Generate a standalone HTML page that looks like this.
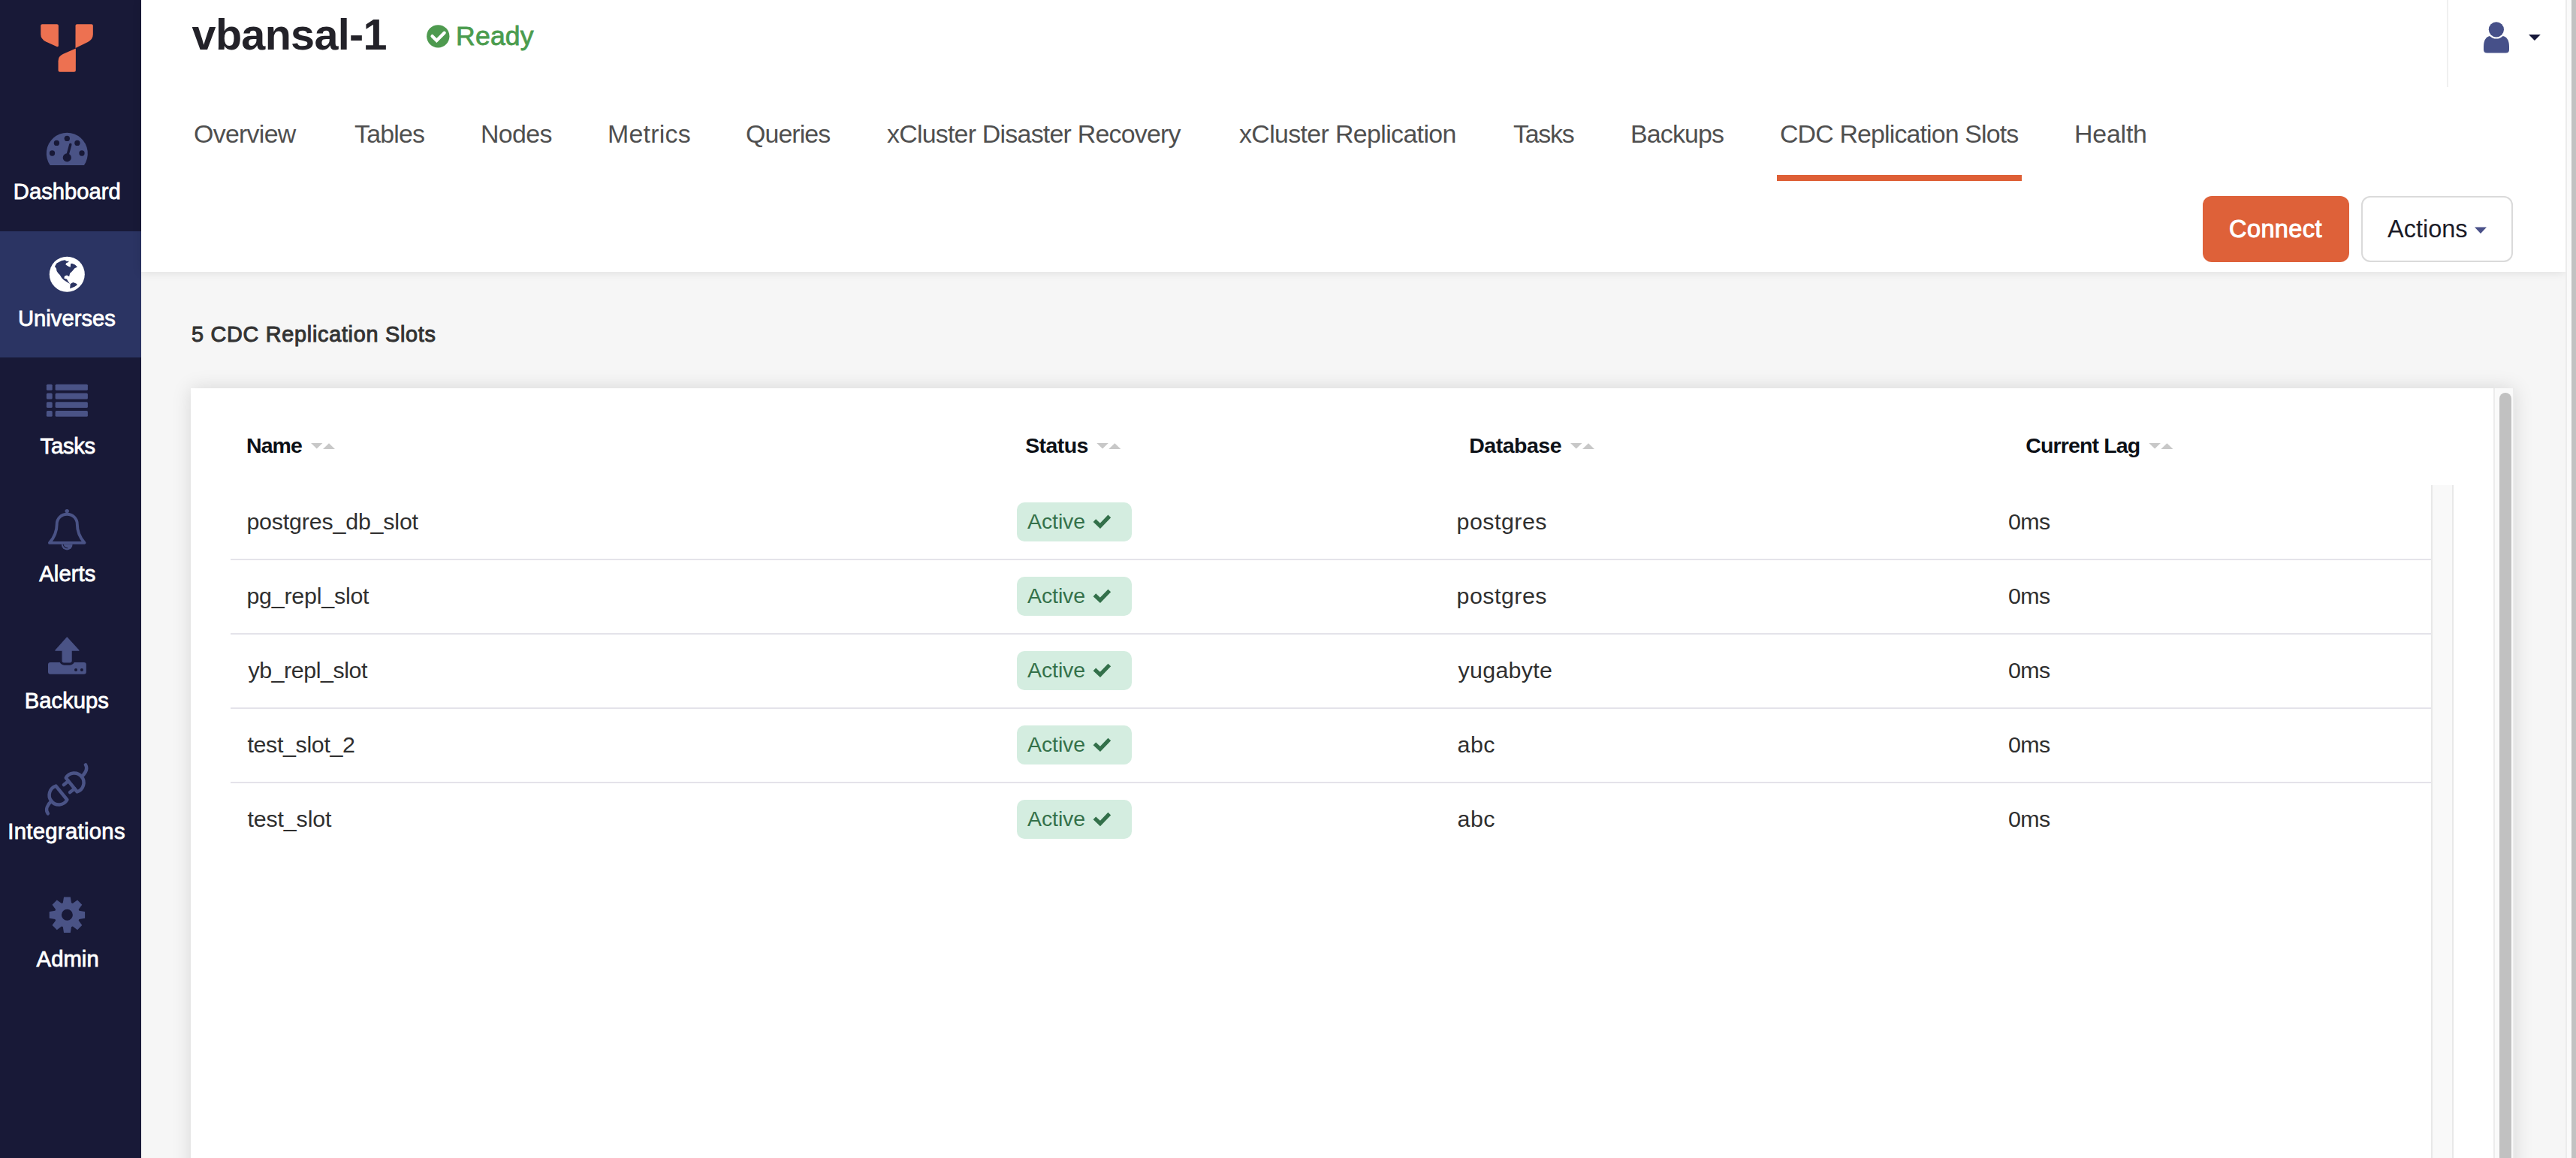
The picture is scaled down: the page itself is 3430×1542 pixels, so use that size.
<!DOCTYPE html>
<html><head><meta charset="utf-8">
<style>
html,body{margin:0;padding:0;}
body{width:3430px;height:1542px;overflow:hidden;position:relative;background:#f6f6f6;font-family:"Liberation Sans", sans-serif;}
.t{position:absolute;white-space:nowrap;line-height:1;}
svg{position:absolute;left:0;top:0;}
</style></head><body>
<div style="position:absolute;left:0;top:0;width:188px;height:1542px;background:#181937"></div>
<div style="position:absolute;left:0;top:308px;width:188px;height:168px;background:#2b3463"></div>
<div style="position:absolute;left:188px;top:0;width:3228px;height:362px;background:#fff;box-shadow:0 1px 12px rgba(0,0,0,0.10)"></div>
<div style="position:absolute;left:3258px;top:0;width:2px;height:116px;background:#f0f0f0"></div>
<div style="position:absolute;left:2366px;top:233px;width:326px;height:8px;background:#de5f36"></div>
<div style="position:absolute;left:2933px;top:261px;width:195px;height:88px;border-radius:12px;background:#de6139"></div>
<div style="position:absolute;left:3144px;top:261px;width:198px;height:84px;border-radius:12px;border:2px solid #dadada;background:#fff"></div>
<div style="position:absolute;left:3416px;top:0;width:14px;height:1542px;background:#fafafa;border-left:2px solid #ececec;box-sizing:border-box"></div>
<div style="position:absolute;left:3424px;top:0;width:6px;height:1542px;background:#c2c2c2"></div>
<div style="position:absolute;left:254px;top:517px;width:3094px;height:1100px;background:#fff;box-shadow:0 0 24px rgba(0,0,0,0.13)"></div>
<div style="position:absolute;left:3320px;top:517px;width:28px;height:1100px;background:#fafafa;border-left:2px solid #ececec;border-right:2px solid #ececec;box-sizing:border-box"></div>
<div style="position:absolute;left:3328px;top:523px;width:16px;height:1100px;background:#c1c1c1;border-radius:8px"></div>
<div style="position:absolute;left:3237px;top:646px;width:30px;height:1000px;background:#f9f9f9;border-left:2px solid #e8e8e8;border-right:2px solid #e8e8e8;box-sizing:border-box"></div>
<div style="position:absolute;left:307px;top:744.0px;width:2930px;height:2px;background:#e4e3ea"></div>
<div style="position:absolute;left:307px;top:843.0px;width:2930px;height:2px;background:#e4e3ea"></div>
<div style="position:absolute;left:307px;top:942.1px;width:2930px;height:2px;background:#e4e3ea"></div>
<div style="position:absolute;left:307px;top:1041.2px;width:2930px;height:2px;background:#e4e3ea"></div>
<div style="position:absolute;left:1354px;top:669.0px;width:153px;height:52px;border-radius:10px;background:#d4ede0"></div>
<div style="position:absolute;left:1354px;top:768.0px;width:153px;height:52px;border-radius:10px;background:#d4ede0"></div>
<div style="position:absolute;left:1354px;top:867.1px;width:153px;height:52px;border-radius:10px;background:#d4ede0"></div>
<div style="position:absolute;left:1354px;top:966.1px;width:153px;height:52px;border-radius:10px;background:#d4ede0"></div>
<div style="position:absolute;left:1354px;top:1065.2px;width:153px;height:52px;border-radius:10px;background:#d4ede0"></div>
<svg width="3430" height="1542" viewBox="0 0 3430 1542">
<g transform="translate(48,26) scale(0.06566)" fill="#ed7151"><path d="M125 95 L425 95 Q455 95 455 125 L455 525 Q455 562 418 550 L200 450 Q95 395 95 300 L95 125 Q95 95 125 95 Z"/><path d="M830 95 L1125 95 Q1155 95 1155 125 L1155 300 Q1155 400 1050 455 L800 578 L800 125 Q800 95 830 95 Z"/><path d="M805 585 L805 1030 Q805 1062 773 1062 L482 1062 Q450 1062 450 1030 L450 840 Q450 745 545 700 Z"/></g>
<g><path d="M66.7 220 A27.5 27.5 0 1 1 111.9 220 Z" fill="#4a5386"/><g fill="#181937"><circle cx="89.3" cy="184.4" r="3.65"/><circle cx="75.4" cy="190.4" r="3.65"/><circle cx="102.9" cy="190.4" r="3.65"/><circle cx="69.5" cy="204" r="3.65"/><circle cx="109" cy="204" r="3.65"/><circle cx="89.3" cy="209.9" r="5.6"/></g><line x1="89.3" y1="209" x2="93.8" y2="192.5" stroke="#181937" stroke-width="3.4" stroke-linecap="round"/></g>
<circle cx="89.3" cy="365.2" r="23.5" fill="#ffffff"/><path d="M72.95 354.69 L75.54 350.54 L81.76 347.18 L86.42 346.14 L89.02 347.95 L91.61 347.44 L91.09 348.99 L87.98 350.54 L87.46 352.62 L91.09 354.69 L93.68 355.73 L94.20 351.06 L96.27 351.06 L99.90 352.62 L103.01 355.47 L99.38 357.28 L96.27 360.91 L93.16 364.02 L92.64 366.09 L92.12 368.16 L89.02 366.61 L85.91 367.64 L85.39 370.75 L89.02 371.79 L90.57 374.38 L93.16 378.01 L89.02 375.41 L84.87 372.82 L82.28 370.23 L79.69 366.09 L77.62 364.02 L75.54 360.91 L75.03 357.80 Z M93.68 378.01 L97.31 375.93 L101.45 377.49 L103.01 379.30 L99.38 381.63 L93.16 384.22 Z" fill="#2b3463"/>
<rect x="61.85" y="511.80" width="7.85" height="7.85" rx="1.5" fill="#4a5386"/>
<rect x="73.6" y="511.80" width="43.3" height="7.85" rx="1.5" fill="#4a5386"/>
<rect x="61.85" y="523.53" width="7.85" height="7.85" rx="1.5" fill="#4a5386"/>
<rect x="73.6" y="523.53" width="43.3" height="7.85" rx="1.5" fill="#4a5386"/>
<rect x="61.85" y="535.26" width="7.85" height="7.85" rx="1.5" fill="#4a5386"/>
<rect x="73.6" y="535.26" width="43.3" height="7.85" rx="1.5" fill="#4a5386"/>
<rect x="61.85" y="546.99" width="7.85" height="7.85" rx="1.5" fill="#4a5386"/>
<rect x="73.6" y="546.99" width="43.3" height="7.85" rx="1.5" fill="#4a5386"/>
<path d="M66 722.9 C72 716 75.7 708 75.7 698 C75.7 690 82 684.7 89.2 684.7 C96.4 684.7 102.8 690 102.8 698 C102.8 708 106.5 716 112.5 722.9 Z" fill="none" stroke="#4a5386" stroke-width="3.9" stroke-linejoin="round"/><circle cx="89.2" cy="680.6" r="2.7" fill="#4a5386"/><path d="M81.8 725 A7.4 7.4 0 0 0 96.6 725 Z" fill="#4a5386"/><path d="M84.2 725 A5.6 5.6 0 0 0 90.2 729.8" fill="none" stroke="#181937" stroke-width="1.1"/>
<path d="M89.25 849 L105 866.1 L95.1 866.1 L95.1 879.8 Q95.1 881.8 93.1 881.8 L85.1 881.8 Q83.1 881.8 83.1 879.8 L83.1 866.1 L73.8 866.1 Z" fill="#4a5386" stroke="#4a5386" stroke-width="1.2" stroke-linejoin="round"/><path d="M67 882 L79.7 882 Q82 885.8 86 885.8 L92.5 885.8 Q96.5 885.8 98.8 882 L111.8 882 Q114.8 882 114.8 885 L114.8 894.8 Q114.8 897.8 111.8 897.8 L67 897.8 Q64 897.8 64 894.8 L64 885 Q64 882 67 882 Z" fill="#4a5386"/><circle cx="101" cy="892" r="2" fill="#181937"/><circle cx="108.9" cy="892" r="2" fill="#181937"/>
<g transform="translate(50,1010) scale(0.069085)" fill="none" stroke="#4a5386" stroke-width="65" stroke-linecap="round" stroke-linejoin="round"><path d="M354 530 L570 796 A184 184 0 1 1 354 530 Z"/><path d="M762 641 L546 375 A184 184 0 1 1 762 641 Z"/><path d="M595 435 L506 507 M713 581 L624 653"/><path d="M267 821 C190 890 145 985 200 1062"/><path d="M849 350 C922 283 968 195 926 122"/></g>
<path d="M105.40 1212.70 L113.10 1213.90 L113.10 1222.70 L105.40 1223.90 L104.67 1225.65 L109.27 1231.95 L103.05 1238.17 L96.75 1233.57 L95.00 1234.30 L93.80 1242.00 L85.00 1242.00 L83.80 1234.30 L82.05 1233.57 L75.75 1238.17 L69.53 1231.95 L74.13 1225.65 L73.40 1223.90 L65.70 1222.70 L65.70 1213.90 L73.40 1212.70 L74.13 1210.95 L69.53 1204.65 L75.75 1198.43 L82.05 1203.03 L83.80 1202.30 L85.00 1194.60 L93.80 1194.60 L95.00 1202.30 L96.75 1203.03 L103.05 1198.43 L109.27 1204.65 L104.67 1210.95 Z M96.90 1218.3 A7.5 7.5 0 1 0 81.90 1218.3 A7.5 7.5 0 1 0 96.90 1218.3 Z" fill="#4a5386" fill-rule="evenodd"/>
<circle cx="583.3" cy="48.3" r="15.15" fill="#4e9a4f"/><path d="M575.6 48.2 L581.4 54 L591.6 43.8" fill="none" stroke="#fff" stroke-width="4.4" stroke-linecap="round" stroke-linejoin="miter"/>
<path d="M3307 66 L3307 62 C3307 53 3311 48 3316 48 L3332 48 C3337 48 3341 53 3341 62 L3341 66 Q3341 70.5 3336.5 70.5 L3311.5 70.5 Q3307 70.5 3307 66 Z" fill="#465089"/><circle cx="3323.9" cy="39.3" r="12.3" fill="#fff"/><circle cx="3323.9" cy="39.3" r="10.1" fill="#465089"/><path d="M3367 45.9 L3382.8 45.9 L3374.9 53.9 Z" fill="#17183a"/>
<path d="M3295 302.6 L3311 302.6 L3303 311 Z" fill="#4a5189"/>
<path d="M414 589.9 L429.5 589.9 L421.75 597.6 Z M430 598 L446 598 L438 590.2 Z" fill="#c8c8c8"/>
<path d="M1460.3 589.9 L1475.8 589.9 L1468.05 597.6 Z M1476.3 598 L1492.3 598 L1484.3 590.2 Z" fill="#c8c8c8"/>
<path d="M2091 589.9 L2106.5 589.9 L2098.75 597.6 Z M2107 598 L2123 598 L2115 590.2 Z" fill="#c8c8c8"/>
<path d="M2861.4 589.9 L2876.9 589.9 L2869.15 597.6 Z M2877.4 598 L2893.4 598 L2885.4 590.2 Z" fill="#c8c8c8"/>
<path d="M1457.4 693.20 L1464.9 700.30 L1477.3 687.40" fill="none" stroke="#33704a" stroke-width="5.2" stroke-linecap="butt" stroke-linejoin="miter"/>
<path d="M1457.4 792.25 L1464.9 799.35 L1477.3 786.45" fill="none" stroke="#33704a" stroke-width="5.2" stroke-linecap="butt" stroke-linejoin="miter"/>
<path d="M1457.4 891.30 L1464.9 898.40 L1477.3 885.50" fill="none" stroke="#33704a" stroke-width="5.2" stroke-linecap="butt" stroke-linejoin="miter"/>
<path d="M1457.4 990.35 L1464.9 997.45 L1477.3 984.55" fill="none" stroke="#33704a" stroke-width="5.2" stroke-linecap="butt" stroke-linejoin="miter"/>
<path d="M1457.4 1089.40 L1464.9 1096.50 L1477.3 1083.60" fill="none" stroke="#33704a" stroke-width="5.2" stroke-linecap="butt" stroke-linejoin="miter"/>
</svg>
<div class="t" style="left:255.6px;top:18.0px;font-size:57.5px;color:#232229;font-weight:700;letter-spacing:-0.675px;">vbansal-1</div>
<div class="t" style="left:607.0px;top:30.7px;font-size:35.5px;color:#4b9c4e;font-weight:400;letter-spacing:0.25px;-webkit-text-stroke:0.8px #4b9c4e;">Ready</div>
<div class="t" style="left:2968.0px;top:288.5px;font-size:32.5px;color:#ffffff;font-weight:400;letter-spacing:0.417px;-webkit-text-stroke:1.0px #ffffff;">Connect</div>
<div class="t" style="left:3179.0px;top:288.5px;font-size:32.5px;color:#1b1b27;font-weight:400;letter-spacing:0.0px;">Actions</div>
<div class="t" style="left:255.0px;top:431.4px;font-size:28.8px;color:#333333;font-weight:400;letter-spacing:0.727px;-webkit-text-stroke:1.0px #333333;">5 CDC Replication Slots</div>
<div class="t" style="left:328.0px;top:578.9px;font-size:28.5px;color:#0d1117;font-weight:700;letter-spacing:-0.933px;">Name</div>
<div class="t" style="left:1365.2px;top:578.9px;font-size:28.5px;color:#0d1117;font-weight:700;letter-spacing:-0.6px;">Status</div>
<div class="t" style="left:1956.2px;top:578.9px;font-size:28.5px;color:#0d1117;font-weight:700;letter-spacing:-0.486px;">Database</div>
<div class="t" style="left:2697.2px;top:578.9px;font-size:28.5px;color:#0d1117;font-weight:700;letter-spacing:-0.85px;">Current Lag</div>
<div class="t" style="left:258.0px;top:162.3px;font-size:33.9px;color:#4f4f4f;font-weight:400;letter-spacing:-0.714px;">Overview</div>
<div class="t" style="left:472.0px;top:162.3px;font-size:33.9px;color:#4f4f4f;font-weight:400;letter-spacing:-0.8px;">Tables</div>
<div class="t" style="left:640.0px;top:162.3px;font-size:33.9px;color:#4f4f4f;font-weight:400;letter-spacing:-0.625px;">Nodes</div>
<div class="t" style="left:809.0px;top:162.3px;font-size:33.9px;color:#4f4f4f;font-weight:400;letter-spacing:0.25px;">Metrics</div>
<div class="t" style="left:993.0px;top:162.3px;font-size:33.9px;color:#4f4f4f;font-weight:400;letter-spacing:-0.917px;">Queries</div>
<div class="t" style="left:1181.0px;top:162.3px;font-size:33.9px;color:#4f4f4f;font-weight:400;letter-spacing:-0.76px;">xCluster Disaster Recovery</div>
<div class="t" style="left:1650.0px;top:162.3px;font-size:33.9px;color:#4f4f4f;font-weight:400;letter-spacing:-0.632px;">xCluster Replication</div>
<div class="t" style="left:2015.0px;top:162.3px;font-size:33.9px;color:#4f4f4f;font-weight:400;letter-spacing:-1.25px;">Tasks</div>
<div class="t" style="left:2171.0px;top:162.3px;font-size:33.9px;color:#4f4f4f;font-weight:400;letter-spacing:-0.833px;">Backups</div>
<div class="t" style="left:2370.0px;top:162.3px;font-size:33.9px;color:#4f4f4f;font-weight:400;letter-spacing:-0.85px;">CDC Replication Slots</div>
<div class="t" style="left:2762.0px;top:162.3px;font-size:33.9px;color:#4f4f4f;font-weight:400;letter-spacing:-0.2px;">Health</div>
<div class="t" style="left:328.4px;top:679.1px;font-size:30.4px;color:#2f2f2f;font-weight:400;letter-spacing:-0.187px;">postgres_db_slot</div>
<div class="t" style="left:1368.0px;top:679.8px;font-size:28.5px;color:#34714a;font-weight:400;letter-spacing:-0.1px;">Active</div>
<div class="t" style="left:1939.6px;top:679.1px;font-size:30.4px;color:#2f2f2f;font-weight:400;letter-spacing:0.471px;">postgres</div>
<div class="t" style="left:2674.0px;top:679.1px;font-size:30.4px;color:#2f2f2f;font-weight:400;letter-spacing:-0.65px;">0ms</div>
<div class="t" style="left:328.4px;top:778.1px;font-size:30.4px;color:#2f2f2f;font-weight:400;letter-spacing:-0.218px;">pg_repl_slot</div>
<div class="t" style="left:1368.0px;top:778.8px;font-size:28.5px;color:#34714a;font-weight:400;letter-spacing:-0.1px;">Active</div>
<div class="t" style="left:1939.6px;top:778.1px;font-size:30.4px;color:#2f2f2f;font-weight:400;letter-spacing:0.471px;">postgres</div>
<div class="t" style="left:2674.0px;top:778.1px;font-size:30.4px;color:#2f2f2f;font-weight:400;letter-spacing:-0.65px;">0ms</div>
<div class="t" style="left:330.4px;top:877.2px;font-size:30.4px;color:#2f2f2f;font-weight:400;letter-spacing:-0.436px;">yb_repl_slot</div>
<div class="t" style="left:1368.0px;top:877.9px;font-size:28.5px;color:#34714a;font-weight:400;letter-spacing:-0.1px;">Active</div>
<div class="t" style="left:1941.6px;top:877.2px;font-size:30.4px;color:#2f2f2f;font-weight:400;letter-spacing:0.271px;">yugabyte</div>
<div class="t" style="left:2674.0px;top:877.2px;font-size:30.4px;color:#2f2f2f;font-weight:400;letter-spacing:-0.65px;">0ms</div>
<div class="t" style="left:329.4px;top:976.2px;font-size:30.4px;color:#2f2f2f;font-weight:400;letter-spacing:-0.34px;">test_slot_2</div>
<div class="t" style="left:1368.0px;top:976.9px;font-size:28.5px;color:#34714a;font-weight:400;letter-spacing:-0.1px;">Active</div>
<div class="t" style="left:1940.6px;top:976.2px;font-size:30.4px;color:#2f2f2f;font-weight:400;letter-spacing:0.45px;">abc</div>
<div class="t" style="left:2674.0px;top:976.2px;font-size:30.4px;color:#2f2f2f;font-weight:400;letter-spacing:-0.65px;">0ms</div>
<div class="t" style="left:329.4px;top:1075.3px;font-size:30.4px;color:#2f2f2f;font-weight:400;letter-spacing:-0.138px;">test_slot</div>
<div class="t" style="left:1368.0px;top:1076.0px;font-size:28.5px;color:#34714a;font-weight:400;letter-spacing:-0.1px;">Active</div>
<div class="t" style="left:1940.6px;top:1075.3px;font-size:30.4px;color:#2f2f2f;font-weight:400;letter-spacing:0.45px;">abc</div>
<div class="t" style="left:2674.0px;top:1075.3px;font-size:30.4px;color:#2f2f2f;font-weight:400;letter-spacing:-0.65px;">0ms</div>
<div class="t" style="left:17.8px;top:240.8px;font-size:29.2px;color:#ffffff;font-weight:400;letter-spacing:0.013px;-webkit-text-stroke:0.8px #ffffff;">Dashboard</div>
<div class="t" style="left:24.0px;top:409.7px;font-size:29.2px;color:#ffffff;font-weight:400;letter-spacing:0.012px;-webkit-text-stroke:0.8px #ffffff;">Universes</div>
<div class="t" style="left:53.6px;top:579.6px;font-size:29.2px;color:#ffffff;font-weight:400;letter-spacing:-0.25px;-webkit-text-stroke:0.8px #ffffff;">Tasks</div>
<div class="t" style="left:52.2px;top:749.8px;font-size:29.2px;color:#ffffff;font-weight:400;letter-spacing:0.12px;-webkit-text-stroke:0.8px #ffffff;">Alerts</div>
<div class="t" style="left:32.8px;top:918.5px;font-size:29.2px;color:#ffffff;font-weight:400;letter-spacing:0.033px;-webkit-text-stroke:0.8px #ffffff;">Backups</div>
<div class="t" style="left:10.2px;top:1092.6px;font-size:29.2px;color:#ffffff;font-weight:400;letter-spacing:0.345px;-webkit-text-stroke:0.8px #ffffff;">Integrations</div>
<div class="t" style="left:48.6px;top:1262.8px;font-size:29.2px;color:#ffffff;font-weight:400;letter-spacing:0.075px;-webkit-text-stroke:0.8px #ffffff;">Admin</div>
</body></html>
